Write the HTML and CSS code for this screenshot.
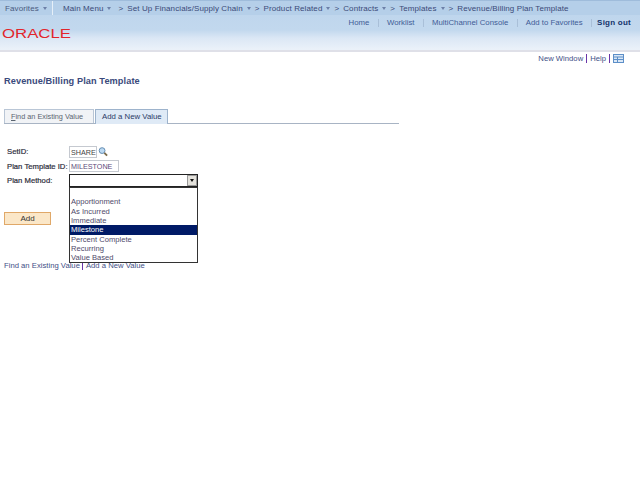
FILE: index.html
```html
<!DOCTYPE html>
<html lang="en">
<head>
<meta charset="utf-8">
<title>Revenue/Billing Plan Template</title>
<link rel="stylesheet" href="styles.css">
</head>
<body>
<header class="header">
  <nav class="crumbs">
    <span class="crumb fav">Favorites<i class="caret"></i></span>
    <span class="crumb main">Main Menu<i class="caret"></i></span>
    <span class="sep">&gt;</span>
    <span class="crumb">Set Up Financials/Supply Chain<i class="caret"></i></span>
    <span class="sep">&gt;</span>
    <span class="crumb">Product Related<i class="caret"></i></span>
    <span class="sep">&gt;</span>
    <span class="crumb">Contracts<i class="caret"></i></span>
    <span class="sep">&gt;</span>
    <span class="crumb">Templates<i class="caret"></i></span>
    <span class="sep">&gt;</span>
    <span class="crumb">Revenue/Billing Plan Template</span>
  </nav>
  <div class="brandrow">
    <svg class="logo" width="72" height="12" viewBox="0 0 72 12"><text x="2" y="10.5" textLength="69" lengthAdjust="spacingAndGlyphs" class="logotext">ORACLE</text></svg>
    <ul class="toplinks">
      <li>Home</li><li>Worklist</li><li>MultiChannel Console</li><li>Add to Favorites</li><li class="signout">Sign out</li>
    </ul>
  </div>
</header>
<div class="pagebar">
  <span>New Window</span><span class="bar"></span><span>Help</span><span class="bar"></span>
  <svg class="cust" width="11" height="9" viewBox="0 0 11 9"><rect x=".5" y=".5" width="10" height="8" fill="#dbe8f6" stroke="#5d8fc8"/><path d="M1 3h9M1 5.5h9M4.5 3v5" stroke="#5d8fc8" fill="none"/></svg>
</div>
<main class="content">
  <h1 class="title">Revenue/Billing Plan Template</h1>
  <div class="tabs">
    <span class="tab"><u>F</u>ind an Existing Value</span>
    <span class="tab active">Add a New Value</span>
  </div>
  <div class="form">
    <div class="row">
      <label>SetID:</label><span class="input setid">SHARE</span>
      <svg class="lens" width="10" height="11" viewBox="0 0 11 11"><circle cx="4.5" cy="4.5" r="3.2" fill="#bcd9f2" stroke="#5b86ad"/><path d="M7 7l3 3" stroke="#7a6a4a" stroke-width="2"/></svg>
    </div>
    <div class="row">
      <label>Plan Template ID:</label><span class="input tmpl">MILESTONE</span>
    </div>
    <div class="row">
      <label>Plan Method:</label>
      <div class="select">
        <span class="arrow"></span>
        <ul class="list">
          <li>&nbsp;</li>
          <li>Apportionment</li>
          <li>As Incurred</li>
          <li>Immediate</li>
          <li class="sel">Milestone</li>
          <li>Percent Complete</li>
          <li>Recurring</li>
          <li>Value Based</li>
        </ul>
      </div>
    </div>
  </div>
  <button class="add" type="button">Add</button>
  <p class="bottom"><span>Find an Existing Value</span><span class="bar2"></span><span>Add a New Value</span></p>
</main>
</body>
</html>
```
FILE: styles.css
```css
* { box-sizing: border-box; }
html, body { margin: 0; padding: 0; background: #fff; }
body { font-family: "Liberation Sans", Arial, sans-serif; font-size: 8px; color: #333; width: 640px; height: 480px; overflow: hidden; }
ul { list-style: none; margin: 0; padding: 0; }

.header { height: 52px; background: linear-gradient(#bcd4ec 0, #c2d8ee 30px, #dbe7f5 38px, #eaf1f9 49px); border-bottom: 2px solid #dfe0e8; }
.crumbs { height: 15px; display: flex; align-items: center; background: #b5cfe9; color: #3b4a78; font-size: 8px; letter-spacing: .1px; border-top: 1px solid #9fbcdb; white-space: nowrap; }
.crumb { display: inline-flex; align-items: center; }
.fav { padding: 0 8px 0 5px; border-right: 1px solid #e6eff8; height: 14px; color: #4a5a80; width: 53px; }
.main { margin-left: 10px; }
.caret { width: 0; height: 0; margin-left: 4px; border: 2.5px solid transparent; border-top: 3px solid #6d80a8; border-bottom: 0; }
.sep { margin: 0 4px 0 4px; color: #3b4a78; }
.main + .sep { margin: 0 4px 0 7px; }

.brandrow { display: flex; justify-content: space-between; height: 35px; }
.logo { margin-top: 12px; flex: none; }
.logotext { font-family: "Liberation Sans", sans-serif; font-size: 12.5px; fill: #e2252b; }
.toplinks { display: flex; align-items: center; height: 15px; color: #3f5c96; font-size: 7.8px; padding-right: 0; }
.toplinks li { padding: 0 8.5px 0 8px; border-left: 1px solid #a9bfd8; line-height: 8px; }
.toplinks li:first-child { border-left: 0; }
.toplinks .signout { padding: 0 9px 0 5px; font-weight: bold; color: #14336b; font-size: 8px; letter-spacing: .03em; border-left: 1px solid #a9bfd8; }

.pagebar { display: flex; justify-content: flex-end; align-items: center; gap: 3px; height: 13px; padding-right: 16px; color: #3f4f86; font-size: 7.7px; }
.bar { width: 1px; height: 9px; background: #6a35a8; }

.content { padding: 0 4px; }
.title { margin: 10px 0 0; font-size: 9.2px; line-height: 12px; font-weight: bold; color: #3a4a7c; letter-spacing: .01em; }
.tabs { display: flex; gap: 1px; margin-top: 22px; width: 395px; height: 15px; border-bottom: 1px solid #a8b4c4; }
.tab { height: 14px; width: 90px; padding-left: 6px; line-height: 13px; font-size: 7.3px; color: #5a6470; border: 1px solid #b9c6d6; border-bottom: 0; background: #f1f3f6; white-space: nowrap; }
.tab.active { width: 73px; font-size: 7.8px; color: #2b3a66; background: #dfeaf6; border-color: #9db3cc; height: 15px; }

.form { margin-top: 20px; }
.row { display: flex; align-items: center; height: 14.5px; position: relative; }
.row:first-child { height: 15px; }
.row:nth-child(2) { height: 14px; }
.row label { width: 62px; margin-left: 3px; font-size: 7.7px; font-weight: normal; color: #2c2c3a; flex: none; -webkit-text-stroke: .2px #2c2c3a; white-space: nowrap; }
.input { display: block; height: 12px; line-height: 11px; padding: 0 1px; border: 1px solid #c5c9d0; background: #fff; color: #5c4a7a; font-size: 7.2px; white-space: nowrap; }
.setid { width: 28px; color: #444; }
.tmpl { width: 50px; }
.lens { margin-left: 1px; }
.select { position: relative; width: 129px; height: 13px; background: #fff; border: 1px solid #222; }
.arrow { position: absolute; right: 0; top: 0; width: 10px; height: 11px; background: #e4e2dc; border: 1px solid #999; }
.arrow::after { content: ""; position: absolute; left: 2px; top: 3px; border: 2.5px solid transparent; border-top: 3px solid #111; border-bottom: 0; }
.list { position: absolute; left: -1px; top: 12px; width: 129px; height: 76px; background: #fff; border: 1px solid #333; color: #4f4a6a; font-size: 7.6px; z-index: 2; }
.list li { height: 9.4px; line-height: 9.4px; padding-left: 1px; white-space: nowrap; }
.list .sel { background: #001a66; color: #fff; }

.add { display: block; margin-top: 24px; width: 47px; height: 13px; padding: 0; font: 8px "Liberation Sans", sans-serif; color: #333; background: #fbe7c8; border: 1px solid #e0a868; }
.bottom { display: flex; align-items: center; gap: 2.5px; margin: 36px 0 0; height: 10px; font-size: 7.7px; color: #3f4f86; }
.bar2 { width: 1px; height: 9px; background: #6a35a8; }
```
